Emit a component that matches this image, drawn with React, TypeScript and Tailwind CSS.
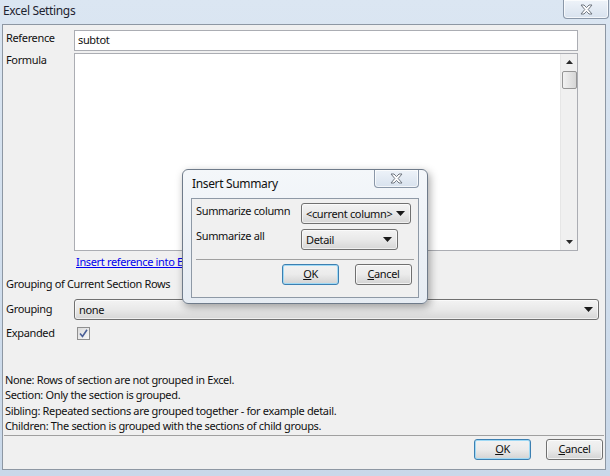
import React from 'react';

const FONT = "font-['Noto_Sans','Liberation_Sans',sans-serif] text-[11px] tracking-[-0.35px] text-[#101010]";

const CloseGlyph: React.FC = () => (
    <svg width="13" height="11" viewBox="0 0 13 11">
        <path
            d="M1 1 H4 L6.5 3.6 L9 1 H12 L8.2 5.5 L12 10 H9 L6.5 7.4 L4 10 H1 L4.8 5.5 Z"
            fill="#ffffff"
            stroke="#6f7680"
            strokeWidth="1"
            strokeLinejoin="round"
        />
    </svg>
);

const CloseButton: React.FC<{ className?: string }> = ({ className = '' }) => (
    <div
        className={`flex items-center justify-center border border-t-0 border-[#8a97a8] rounded-b-[4px] bg-gradient-to-b from-[#eef3f9] to-[#d8e2ee] shadow-[inset_0_0_0_1px_rgba(255,255,255,0.7)] ${className}`}
    >
        <CloseGlyph />
    </div>
);

const Arrow: React.FC = () => (
    <svg width="9" height="5" viewBox="0 0 9 5">
        <path d="M0 0 H9 L4.5 5 Z" fill="#1a1a1a" />
    </svg>
);

const Combo: React.FC<{ value: string; className?: string }> = ({ value, className = '' }) => (
    <div
        className={`flex items-center justify-between h-[21px] pl-[4px] pr-[5px] border border-[#707070] rounded-[3px] bg-gradient-to-b from-[#f3f3f3] via-[#e9e9e9] to-[#d6d6d6] shadow-[inset_0_0_0_1px_rgba(255,255,255,0.6)] ${className}`}
    >
        <span className="leading-none whitespace-nowrap">{value}</span>
        <Arrow />
    </div>
);

const Button: React.FC<{ label: string; accel: string; isDefault?: boolean }> = ({ label, accel, isDefault = false }) => (
    <div
        className={`flex items-center justify-center w-[57px] h-[21px] rounded-[3px] border ${
            isDefault
                ? 'border-[#3c7fb1] shadow-[inset_0_0_0_1px_#9fd9f5]'
                : 'border-[#707070] shadow-[inset_0_0_0_1px_rgba(255,255,255,0.7)]'
        } bg-gradient-to-b from-[#f2f2f2] via-[#ebebeb] to-[#d3d3d3]`}
    >
        <span>
            <span className="underline">{accel}</span>
            {label.slice(accel.length)}
        </span>
    </div>
);

const Separator: React.FC<{ className?: string }> = ({ className = '' }) => (
    <div className={`h-[2px] border-t border-[#a0a0a0] border-b-white ${className}`} />
);

const helpLines = [
    'None: Rows of section are not grouped in Excel.',
    'Section: Only the section is grouped.',
    'Sibling: Repeated sections are grouped together - for example detail.',
    'Children: The section is grouped with the sections of child groups.',
];

const InsertSummary: React.FC = () => (
    <div className="absolute left-[182px] top-[169px] w-[246px] h-[135px] rounded-[6px] border border-[#6f7b8a] bg-gradient-to-b from-[#f4f7fa] to-[#e6ecf3] shadow-[2px_3px_8px_rgba(0,0,0,0.35)] flex flex-col">
        <div className="relative h-[28px] flex items-center pl-[9px]">
            <span className="text-[12px]">Insert Summary</span>
            <CloseButton className="absolute right-[8px] top-0 w-[45px] h-[18px]" />
        </div>
        <div className="mx-[8px] h-[100px] border border-[#8e99a6] bg-[#f0f0f0] flex flex-col px-[4px] pt-[3px]">
            <div className="flex items-center h-[22px]">
                <span className="w-[105px] -mt-[3px]">Summarize column</span>
                <Combo value="<current column>" className="w-[110px]" />
            </div>
            <div className="flex items-center h-[22px] mt-[4px]">
                <span className="w-[105px] -mt-[5px]">Summarize all</span>
                <Combo value="Detail" className="w-[97px]" />
            </div>
            <Separator className="mt-[9px]" />
            <div className="flex justify-end gap-[16px] mt-[3px] pr-[2px]">
                <Button label="OK" accel="O" isDefault />
                <Button label="Cancel" accel="C" />
            </div>
        </div>
    </div>
);

export default function App() {
    return (
        <div className={`relative w-[610px] h-[476px] overflow-hidden flex flex-col bg-gradient-to-b from-[#dbe6f2] to-[#c9d8e9] ${FONT}`}>
            <div className="relative h-[24px] flex items-center pl-[3px]">
                <span className="text-[12px] text-[#1e2430] -mt-[2px]">Excel Settings</span>
                <CloseButton className="absolute right-[1px] top-0 w-[46px] h-[19px]" />
            </div>
            <div className="ml-[2px] mr-[4px] h-[446px] border border-[#8d97a3] bg-[#f0f0f0] flex flex-col">
                <div className="flex items-start mt-[5px]">
                    <span className="w-[71px] pl-[3px]">Reference</span>
                    <div className="w-[504px] h-[21px] border border-[#abadb3] bg-white flex items-center pl-[3px]">
                        subtot
                    </div>
                </div>
                <div className="flex items-start mt-[2px]">
                    <span className="w-[71px] pl-[3px] -mt-[1px]">Formula</span>
                    <div className="w-[504px] h-[198px] border border-[#abadb3] bg-white flex justify-end">
                        <div className="w-[17px] h-full bg-[#f0f0f0] border-l border-[#e6e6e6] flex flex-col items-center">
                            <div className="h-[16px] flex items-center justify-center">
                                <svg width="7" height="4" viewBox="0 0 7 4">
                                    <path d="M0 4 L3.5 0 L7 4 Z" fill="#2a2a2a" />
                                </svg>
                            </div>
                            <div className="w-[15px] h-[18px] mt-[1px] rounded-[2px] border border-[#959595] bg-gradient-to-r from-[#f2f2f2] to-[#d6d6d6]" />
                            <div className="flex-1" />
                            <div className="h-[16px] flex items-center justify-center">
                                <svg width="7" height="4" viewBox="0 0 7 4">
                                    <path d="M0 0 H7 L3.5 4 Z" fill="#2a2a2a" />
                                </svg>
                            </div>
                        </div>
                    </div>
                </div>
                <div className="pl-[73px] mt-[3px]">
                    <span className="text-[#0000ee] underline">Insert reference into Excel formula</span>
                </div>
                <div className="pl-[3px] mt-[5px]">Grouping of Current Section Rows</div>
                <div className="flex items-start mt-[9px]">
                    <span className="w-[71px] pl-[3px]">Grouping</span>
                    <Combo value="none" className="w-[525px] -mt-[2px]" />
                </div>
                <div className="flex items-center mt-[5px]">
                    <span className="w-[74px] pl-[3px]">Expanded</span>
                    <div className="w-[13px] h-[13px] border border-[#8f8f8f] bg-gradient-to-br from-[#dcdcdc] to-[#f8f8f8] flex items-center justify-center">
                        <svg width="9" height="9" viewBox="0 0 9 9">
                            <path d="M1 4.5 L3.5 7.5 L8 0.8" fill="none" stroke="#4a5f97" strokeWidth="1.6" />
                        </svg>
                    </div>
                </div>
                <div className="flex flex-col pl-[2px] mt-[30px] leading-[15.5px]">
                    {helpLines.map((line) => (
                        <span key={line}>{line}</span>
                    ))}
                </div>
                <Separator className="mx-[1px] mt-[1px]" />
                <div className="flex justify-end gap-[15px] mt-[2px] pr-[2px]">
                    <Button label="OK" accel="O" isDefault />
                    <Button label="Cancel" accel="C" />
                </div>
            </div>
            <InsertSummary />
        </div>
    );
}
